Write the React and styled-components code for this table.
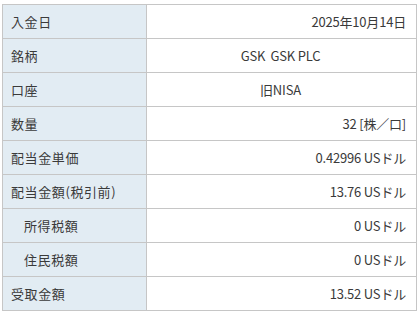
import React from 'react'
import styled, { createGlobalStyle } from 'styled-components'

const GlobalStyle = createGlobalStyle`
  html, body {
    margin: 0;
    background: #ffffff;
  }
  body {
    font-family: "Noto Sans CJK JP", "Liberation Sans", sans-serif;
    color: #3a3a3a;
  }
`

const Page = styled.div`
  padding: 4px 3px 0 2px;
`

const Table = styled.table`
  width: 415px;
  border-collapse: collapse;
  table-layout: fixed;
  font-size: 13px;
`

const Label = styled.th`
  width: 144px;
  height: 34px;
  box-sizing: border-box;
  padding: 0 0 0 ${p => (p.$indent ? 21 : 8)}px;
  background: #e2ecf3;
  border: 1px solid #c6c6c6;
  text-align: left;
  font-weight: normal;
  letter-spacing: 0.6px;
`

const Value = styled.td`
  height: 34px;
  box-sizing: border-box;
  padding: 0 10px 0 8px;
  border: 1px solid #c6c6c6;
  text-align: ${p => p.$align || 'right'};
  letter-spacing: -0.2px;
`

const rows = [
  { label: '入金日', value: '2025年10月14日' },
  { label: '銘柄', value: 'GSK\u00a0\u00a0GSK PLC', align: 'center' },
  { label: '口座', value: '旧NISA', align: 'center' },
  { label: '数量', value: '32 [株／口]' },
  { label: '配当金単価', value: '0.42996 USドル' },
  { label: '配当金額(税引前)', value: '13.76 USドル' },
  { label: '所得税額', value: '0 USドル', indent: true },
  { label: '住民税額', value: '0 USドル', indent: true },
  { label: '受取金額', value: '13.52 USドル' },
]

export default function App() {
  return (
    <Page>
      <GlobalStyle />
      <Table>
        <tbody>
          {rows.map(r => (
            <tr key={r.label}>
              <Label $indent={r.indent}>{r.label}</Label>
              <Value $align={r.align}>{r.value}</Value>
            </tr>
          ))}
        </tbody>
      </Table>
    </Page>
  )
}
